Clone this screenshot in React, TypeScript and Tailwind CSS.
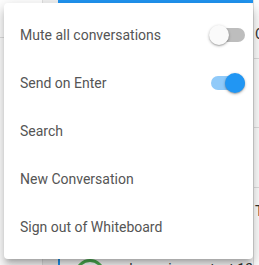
import { useState } from 'react'

type ToggleProps = { on: boolean; onClick: () => void }

function Toggle({ on, onClick }: ToggleProps) {
  return (
    <button type="button" onClick={onClick} className="relative w-[36px] h-[20px] shrink-0">
      <span className={`absolute left-[2px] top-[3px] w-[34px] h-[14px] rounded-full ${on ? 'bg-[#90caf9]' : 'bg-[#bdbdbd]'}`} />
      <span
        className={`absolute top-0 w-[20px] h-[20px] rounded-full shadow-[0_1px_3px_rgba(0,0,0,0.3),0_1px_1px_rgba(0,0,0,0.14)] ${on ? 'right-0 bg-[#2196f3]' : 'left-0 bg-[#fafafa]'}`}
      />
    </button>
  )
}

export default function App() {
  const [muted, setMuted] = useState(false)
  const [sendOnEnter, setSendOnEnter] = useState(true)

  const items = ['Search', 'New Conversation', 'Sign out of Whiteboard']

  return (
    <div className="relative w-[259px] h-[265px] overflow-hidden bg-white font-['Roboto',sans-serif]">
      {/* app behind the menu */}
      <div className="flex h-full">
        <div className="w-[44px] border-r border-[#e0e0e0] flex flex-col">
          <div className="h-[38px] border-b border-[#e0e0e0]" />
        </div>
        <div className="w-[15px] bg-[#f2f2f2]" />
        <div className="flex-1 flex flex-col">
          <div className="h-[3px] bg-[#2196f3]" />
          <div className="flex-1" />
          <div className="h-[7px] flex border-l-2 border-[#2196f3]">
            <div className="ml-[15px] mt-[1px] w-[30px] h-[30px] rounded-full border-[3px] border-[#4caf50] shrink-0" />
            <div className="ml-[24px] mt-[4px] text-[14px] leading-none text-[#333] whitespace-nowrap">lorem ipsum text 12</div>
          </div>
        </div>
        <div className="w-[6px] border-l border-[#e0e0e0] flex flex-col text-[14px] leading-none text-[#333]">
          <div className="h-[59px] border-b border-[#e0e0e0] pt-[27px] pl-[1px]">C</div>
          <div className="h-[69px] border-b border-[#e0e0e0]" />
          <div className="h-[60px] border-b border-[#e0e0e0]" />
          <div className="pt-[16px] pl-[1px]">T</div>
        </div>
      </div>

      {/* overflow menu */}
      <div className="absolute left-[4px] top-[3px] w-[249px] py-2 bg-white rounded-[4px] shadow-[0px_5px_5px_-3px_rgba(0,0,0,0.2),0px_8px_10px_1px_rgba(0,0,0,0.14),0px_3px_14px_2px_rgba(0,0,0,0.12)] text-[14px] text-[#555]">
        <div className="h-[48px] flex items-center justify-between pl-4 pr-[8px]">
          <span>Mute all conversations</span>
          <Toggle on={muted} onClick={() => setMuted(!muted)} />
        </div>
        <div className="h-[48px] flex items-center justify-between pl-4 pr-[8px]">
          <span>Send on Enter</span>
          <Toggle on={sendOnEnter} onClick={() => setSendOnEnter(!sendOnEnter)} />
        </div>
        {items.map((label) => (
          <div key={label} className="h-[48px] flex items-center px-4">
            {label}
          </div>
        ))}
      </div>
    </div>
  )
}
